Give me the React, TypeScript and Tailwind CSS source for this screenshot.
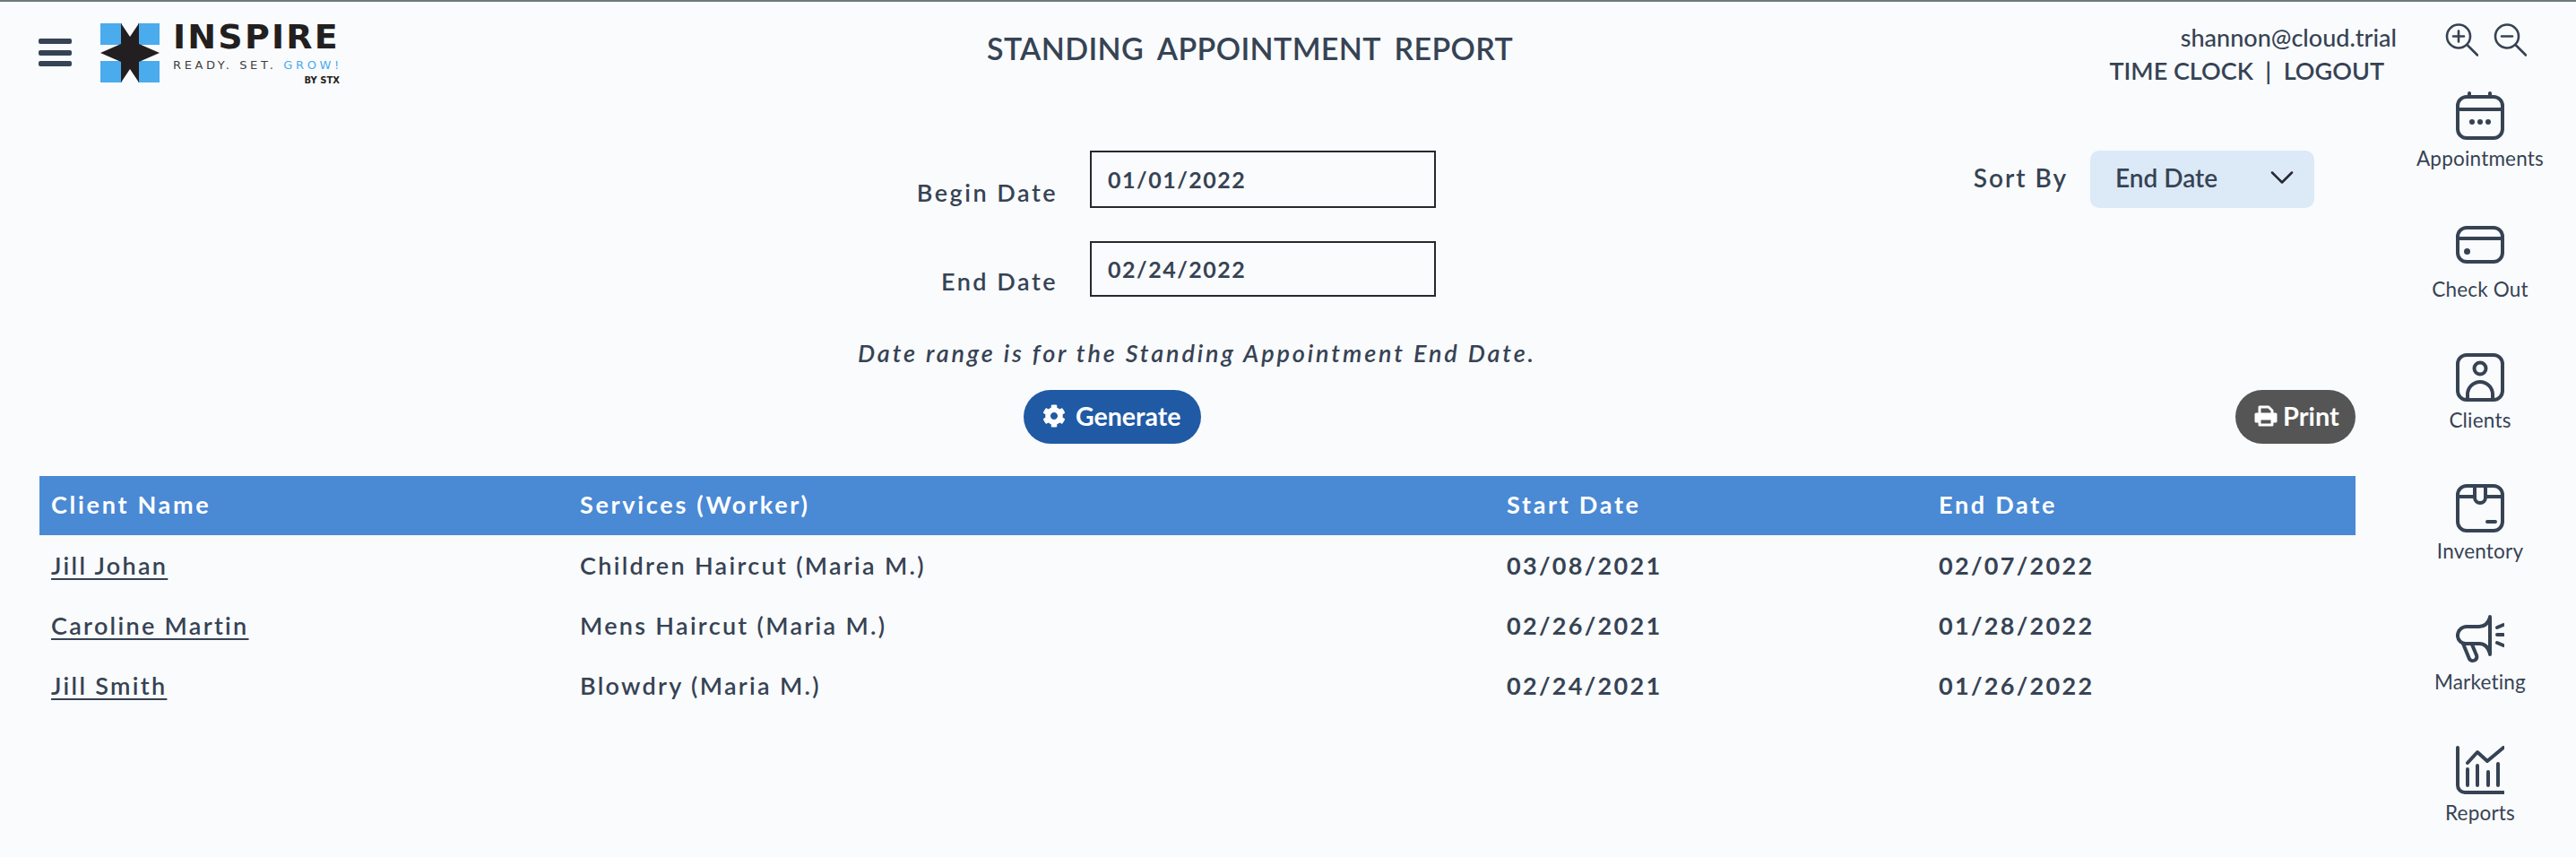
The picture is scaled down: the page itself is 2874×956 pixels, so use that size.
import React from "react";
import { ChevronDown } from "lucide-react";
import { FaCog } from "react-icons/fa";

const rows = [
  { name: "Jill Johan", service: "Children Haircut (Maria M.)", start: "03/08/2021", end: "02/07/2022" },
  { name: "Caroline Martin", service: "Mens Haircut (Maria M.)", start: "02/26/2021", end: "01/28/2022" },
  { name: "Jill Smith", service: "Blowdry (Maria M.)", start: "02/24/2021", end: "01/26/2022" },
];

/* Sidebar icons, all on a 54 box */
const icon = {
  fill: "none",
  stroke: "#364354",
  strokeWidth: 4,
  strokeLinecap: "round" as const,
  strokeLinejoin: "round" as const,
};

function CalendarIcon() {
  return (
    <svg width="54" height="54" viewBox="0 0 54 54" {...icon}>
      <rect x="2" y="6" width="50" height="46" rx="10" />
      <path d="M2 20h50M15 2v4M38 2v4" />
      <g fill="#364354" stroke="none">
        <circle cx="18" cy="34" r="3" />
        <circle cx="27" cy="34" r="3" />
        <circle cx="36" cy="34" r="3" />
      </g>
    </svg>
  );
}

function CardIcon() {
  return (
    <svg width="54" height="54" viewBox="0 0 54 54" {...icon}>
      <rect x="2" y="6" width="50" height="38" rx="10" />
      <path d="M2 18h50" />
      <circle cx="12.5" cy="32.5" r="3.5" fill="#364354" stroke="none" />
    </svg>
  );
}

function ClientIcon() {
  return (
    <svg width="54" height="54" viewBox="0 0 54 54" {...icon}>
      <rect x="2" y="2" width="50" height="50" rx="10" />
      <circle cx="27" cy="17" r="6.5" />
      <path d="M13 52v-6a14 14 0 0 1 28 0v6" />
    </svg>
  );
}

function BoxIcon() {
  return (
    <svg width="54" height="54" viewBox="0 0 54 54" {...icon}>
      <rect x="2" y="2" width="50" height="50" rx="10" />
      <path d="M2 14h19M33 14h19M21 2v13a6 6 0 0 0 12 0V2M35 42h9" />
    </svg>
  );
}

function MegaphoneIcon() {
  return (
    <svg width="54" height="54" viewBox="0 0 54 54" {...icon}>
      <path d="M38 2v42M38 3C36 9 32 13 26 13H12A10 10 0 0 0 2 23v1a9 9 0 0 0 9 8h15c6 0 10 4 12 11" />
      <path d="M8 32l7 17c2 4 10 2 8-4l-5-12M46 14l7-3M46 22h7M46 31l7 3" />
    </svg>
  );
}

function ChartIcon() {
  return (
    <svg width="54" height="54" viewBox="0 0 54 54" {...icon}>
      <path d="M2 2v42a8 8 0 0 0 8 8h43" />
      <path d="M13 19l11-12 11 10L53 2M13 26v18M24 22v22M36 29v15M47 20v24" />
    </svg>
  );
}

const nav = [
  { label: "Appointments", Icon: CalendarIcon },
  { label: "Check Out", Icon: CardIcon },
  { label: "Clients", Icon: ClientIcon },
  { label: "Inventory", Icon: BoxIcon },
  { label: "Marketing", Icon: MegaphoneIcon },
  { label: "Reports", Icon: ChartIcon },
];

function Logo() {
  return (
    <div className="flex items-start gap-[15px]">
      <svg width="66" height="66" viewBox="0 0 66 66">
        <g fill="#4aabed">
          <rect x="0" y="0" width="24" height="24" />
          <rect x="42" y="0" width="24" height="24" />
          <rect x="0" y="42" width="24" height="24" />
          <rect x="42" y="42" width="24" height="24" />
        </g>
        <polygon
          fill="#231f20"
          points="23,0 33,15 43,0 43,23 66,33 43,43 43,66 33,51 23,66 23,43 0,33 23,23"
        />
      </svg>
      <div className="flex w-[186px] flex-col font-['DejaVu_Sans',sans-serif]">
        <span className="text-[38px] leading-[30px] font-bold tracking-[2.2px] text-[#231f20]">INSPIRE</span>
        <span className="mt-[9px] text-[13px] leading-[15px] tracking-[3.6px] whitespace-nowrap text-[#3f3f3f]">
          READY. SET. <span className="text-[#4aabed]">GROW!</span>
        </span>
        <span className="mt-[4px] self-end text-[10px] leading-[12px] font-bold text-[#231f20]">BY STX</span>
      </div>
    </div>
  );
}

function ZoomIcon({ plus }: { plus?: boolean }) {
  return (
    <svg width="37" height="37" viewBox="0 0 37 37" fill="none" stroke="#364354" strokeWidth="2.6" strokeLinecap="round">
      <circle cx="15" cy="14.5" r="13" />
      <path d={plus ? "M9 14.5h12M15 8.5v12" : "M9 14.5h12"} />
      <path d="M25 24.5l11 11" />
    </svg>
  );
}

function PrintIcon() {
  return (
    <svg width="26" height="24" viewBox="0 0 26 24" fill="none" stroke="#fff" strokeWidth="3" strokeLinejoin="round">
      <path d="M6 10V2h10l4 4v4" />
      <path d="M2 10h22v8H2z" fill="#fff" />
      <path d="M6 15h14v7H6z" fill="#555" />
    </svg>
  );
}

export default function App() {
  return (
    <div className="h-[956px] w-[2874px] overflow-hidden border-t-2 border-[#6c7a7d] bg-[#fafbfd] font-['Lato',sans-serif] text-[#364354]">
      {/* Top bar */}
      <header className="flex h-[100px] items-start">
        <div className="flex w-[1101px] items-start pt-[24px] pl-[43px]">
          <div className="mt-[17px] flex w-[37px] flex-col gap-[6.5px]">
            <div className="h-[6px] rounded-[2px] bg-[#364354]" />
            <div className="h-[6px] rounded-[2px] bg-[#364354]" />
            <div className="h-[6px] rounded-[2px] bg-[#364354]" />
          </div>
          <div className="ml-[32px]">
            <Logo />
          </div>
        </div>
        <h1 className="pt-[32px] text-[34px] leading-[40px] font-semibold tracking-[0.35px] [word-spacing:7px] whitespace-nowrap">
          STANDING APPOINTMENT REPORT
        </h1>
        <div className="ml-auto flex flex-col items-end pt-[23px]">
          <div className="text-[27px] leading-[34px] font-medium">shannon@cloud.trial</div>
          <div className="mt-[3px] pr-[14px] text-[27px] leading-[34px] font-semibold whitespace-nowrap">
            TIME CLOCK&nbsp;&nbsp;|&nbsp;&nbsp;LOGOUT
          </div>
        </div>
        <div className="mr-[55px] ml-[54px] flex gap-[17px] pt-[24px]">
          <ZoomIcon plus />
          <ZoomIcon />
        </div>
      </header>

      <div className="flex">
        {/* Report */}
        <main className="w-[2660px] pr-[32px] pl-[44px]">
          <div className="flex items-start pt-[66px]">
            <div className="flex flex-col">
              <div className="flex items-end">
                <label className="w-[1136px] text-right text-[27px] leading-[34px] font-semibold tracking-[2.5px]">Begin Date</label>
                <div className="ml-[36px] flex h-[64px] w-[386px] items-center border-2 border-[#25282e] pt-[2px] pl-[18px] text-[25px] font-bold tracking-[1.5px]">
                  01/01/2022
                </div>
              </div>
              <div className="mt-[37px] flex items-end">
                <label className="w-[1136px] text-right text-[27px] leading-[34px] font-semibold tracking-[2.5px]">End Date</label>
                <div className="ml-[36px] flex h-[62px] w-[386px] items-center border-2 border-[#25282e] pt-[2px] pl-[18px] text-[25px] font-bold tracking-[1.5px]">
                  02/24/2022
                </div>
              </div>
            </div>
            <div className="ml-auto flex items-center gap-[25px]">
              <span className="pb-[4px] text-[28px] font-semibold tracking-[2px]">Sort By</span>
              <div className="mr-[46px] flex h-[64px] w-[250px] items-center justify-between rounded-[10px] bg-[#dce9f7] pr-[14px] pb-[4px] pl-[28px] text-[28px] font-semibold">
                End Date
                <ChevronDown size={44} strokeWidth={1.4} color="#25282e" />
              </div>
            </div>
          </div>

          <p className="mt-[46px] pl-[913px] text-[27px] leading-[34px] font-semibold tracking-[2.9px] italic whitespace-nowrap">
            Date range is for the Standing Appointment End Date.
          </p>

          <div className="mt-[24px] flex items-center">
            <button className="ml-[1098px] flex h-[60px] w-[198px] items-center gap-[11px] rounded-full bg-[#205aa5] pb-[2px] pl-[21px] text-[28.5px] font-bold text-white">
              <FaCog size={26} />
              Generate
            </button>
            <button className="ml-auto flex h-[60px] w-[134px] items-center gap-[6px] rounded-full bg-[#555555] pb-[2px] pl-[21px] text-[29px] font-bold text-white">
              <PrintIcon />
              Print
            </button>
          </div>

          <table className="mt-[36px] w-[2584px] table-fixed border-collapse text-[27px] font-semibold tracking-[2.3px]">
            <colgroup>
              <col className="w-[603px]" />
              <col className="w-[1034px]" />
              <col className="w-[482px]" />
              <col />
            </colgroup>
            <thead>
              <tr className="h-[66px] bg-[#4a89d4] text-left tracking-[2.7px] text-white">
                <th className="pb-[2px] pl-[13px] font-bold">Client Name</th>
                <th className="pb-[2px] font-bold">Services (Worker)</th>
                <th className="pb-[2px] font-bold">Start Date</th>
                <th className="pb-[2px] font-bold">End Date</th>
              </tr>
            </thead>
            <tbody>
              {rows.map((r) => (
                <tr key={r.name} className="h-[67px]">
                  <td className="pt-[2px] pl-[13px]">
                    <a className="underline decoration-2 underline-offset-[4px]">{r.name}</a>
                  </td>
                  <td className="pt-[2px]">{r.service}</td>
                  <td className="pt-[2px] font-bold">{r.start}</td>
                  <td className="pt-[2px] font-bold">{r.end}</td>
                </tr>
              ))}
            </tbody>
          </table>
        </main>

        {/* Right nav */}
        <nav className="flex w-[214px] flex-col items-center">
          {nav.map(({ label, Icon }) => (
            <div key={label} className="flex h-[146px] flex-col items-center">
              <Icon />
              <span className="mt-[7px] text-[22.5px] leading-[28px] tracking-[0.2px]">{label}</span>
            </div>
          ))}
        </nav>
      </div>
    </div>
  );
}
